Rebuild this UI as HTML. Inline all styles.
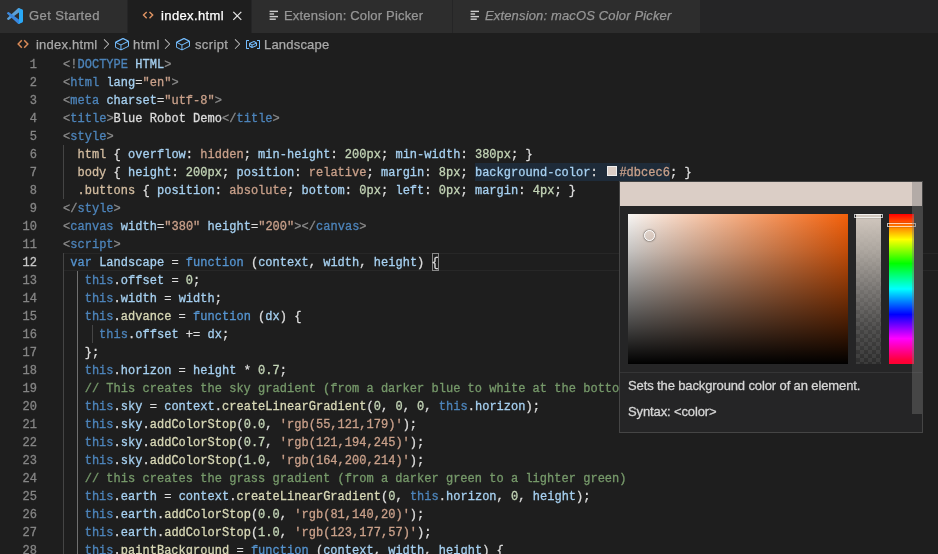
<!DOCTYPE html>
<html lang="en">
<head>
<meta charset="utf-8">
<title>index.html</title>
<style>
html,body{margin:0;padding:0;}
body{width:938px;height:554px;overflow:hidden;background:#1e1e1e;position:relative;font-family:"Liberation Sans",sans-serif;}
#tabs{position:absolute;left:0;top:0;width:938px;height:33px;background:#252526;}
.tab{position:absolute;top:0;height:33px;background:#2d2d2d;color:#969696;font-size:13px;line-height:32px;white-space:nowrap;}
.tab.active{background:#1e1e1e;color:#ffffff;}
.tab .lbl{position:absolute;top:0;}
.lbl,#crumbs span,.row,.txt{will-change:transform;}
.lbl,#crumbs span{-webkit-text-stroke:0.25px;}
.tab svg{position:absolute;}
#crumbs{position:absolute;left:0;top:33px;width:938px;height:22px;color:#a9a9a9;font-size:13px;line-height:22px;white-space:nowrap;}
#crumbs span,#crumbs svg{position:absolute;top:1px;}
#crumbs svg{top:3px;}
#editor{position:absolute;left:0;top:0;width:938px;height:554px;font-family:"Liberation Mono",monospace;font-size:12px;letter-spacing:0.024px;-webkit-text-stroke:0.3px;}
.row{position:absolute;left:0;width:938px;height:18px;line-height:18px;white-space:pre;}
.ln{position:absolute;left:0;top:1px;width:37px;text-align:right;color:#858585;}
.ln.cur{color:#c6c6c6;}
.code{position:absolute;top:1px;}
.hlbg{position:absolute;left:474.8px;top:163px;width:195px;height:18px;background:#1e2b39;}
.sw{display:inline-block;box-sizing:border-box;width:9.6px;height:9.6px;background:#dbcec6;border:1.2px solid #eeeeee;margin:0 2px 0 2.4px;vertical-align:0px;width:10px;height:10px;}
.brbox{position:absolute;left:432px;top:253px;width:7px;height:18px;box-sizing:border-box;border:1px solid #888888;}
.guide{position:absolute;width:1px;background:#454545;}
.guide.act{background:#707070;}
#curline{position:absolute;left:63px;top:253px;width:875px;height:18px;box-sizing:border-box;border-top:1px solid #272727;border-bottom:1px solid #272727;}
#hover{position:absolute;left:619px;top:181px;width:304px;height:252px;background:#252526;border:1px solid #454545;box-sizing:border-box;}
#hover .hdr{position:absolute;left:0;top:0;width:302px;height:24px;background:#dbcec6;}
#hover .sat{position:absolute;left:8px;top:32px;width:220px;height:150px;background:linear-gradient(to bottom,rgba(0,0,0,0) 0%,rgba(0,0,0,.21) 25%,rgba(0,0,0,.47) 50%,rgba(0,0,0,.73) 75%,#000 100%),linear-gradient(to right,#f8f6f4,#f4600a);}
#hover .knob{position:absolute;left:23.6px;top:47.8px;width:9px;height:9px;border:1px solid #fff;border-radius:50%;box-shadow:0 0 2px rgba(0,0,0,.8);}
#hover .alpha{position:absolute;left:236px;top:32px;width:25px;height:150px;background:linear-gradient(to bottom,#d3c9c0 0%,rgba(205,197,188,.78) 25%,rgba(190,184,178,.5) 50%,rgba(170,166,162,.22) 75%,rgba(160,160,160,0) 100%),repeating-conic-gradient(#3b3b3b 0% 25%,#2d2d2d 0% 50%) 0 0/8px 8px;}
#hover .hue{position:absolute;left:269px;top:32px;width:25px;height:150px;background:linear-gradient(to bottom,#ff0000 0%,#ffff00 17%,#00ff00 33%,#00ffff 50%,#0000ff 67%,#ff00ff 83%,#ff0040 97%,#ff0030 100%);}
#hover .slider{position:absolute;width:29px;height:4px;box-sizing:border-box;border:1px solid rgba(255,255,255,.71);box-shadow:0 0 1px rgba(0,0,0,.85);}
#hover .sep{position:absolute;left:0;top:190px;width:302px;height:1px;background:#353536;}
#hover .sb{position:absolute;left:292px;top:0;width:10px;height:232px;background:rgba(121,121,121,.4);}
#hover .txt{position:absolute;left:8px;-webkit-text-stroke:0.3px;color:#d6d6d6;font-size:13px;line-height:18px;white-space:nowrap;letter-spacing:-0.12px;}
</style>
</head>
<body>
<div id="tabs">
  <div class="tab" style="left:0;width:127px;">
    <svg style="left:7px;top:8px;" width="16" height="16" viewBox="0 0 100 100">
      <path fill="#5b9fd6" d="M96.46 10.8L75.86.88a6.23 6.23 0 0 0-7.11 1.2L1.3 63.58a4.17 4.17 0 0 0 0 6.17l5.51 5a2.78 2.78 0 0 0 3.55.16L93.36 13.37c2.73-2.07 6.64-.12 6.64 3.3v-.24a6.25 6.25 0 0 0-3.54-5.63z"/>
      <path fill="#3a86dc" d="M96.46 89.2l-20.6 9.92a6.23 6.23 0 0 1-7.11-1.2L1.3 36.42a4.17 4.17 0 0 1 0-6.17l5.51-5a2.78 2.78 0 0 1 3.55-.16l83 61.54c2.73 2.07 6.64.12 6.64-3.3v.24a6.25 6.25 0 0 1-3.54 5.63z"/>
      <path fill="#29a9f7" d="M75.86 99.13a6.23 6.23 0 0 1-7.11-1.21c2.31 2.3 6.25.67 6.25-2.59V4.67c0-3.26-3.94-4.89-6.25-2.59a6.23 6.23 0 0 1 7.11-1.2l20.6 9.9A6.25 6.25 0 0 1 100 16.41v67.18a6.25 6.25 0 0 1-3.54 5.63l-20.6 9.91z"/>
    </svg>
    <span class="lbl" style="left:29.4px;letter-spacing:0.40px;">Get Started</span>
  </div>
  <div class="tab active" style="left:128px;width:123px;">
    <svg style="left:12px;top:8px;" width="16" height="16" viewBox="0 0 16 16" fill="none" stroke="#df9463" stroke-width="1.4"><path d="M6.7 3.9L3.5 7.1L6.7 10.3M9.5 3.9L12.7 7.1L9.5 10.3"/></svg>
    <span class="lbl" style="left:32.8px;letter-spacing:0.38px;">index.html</span>
    <svg style="left:101px;top:8px;" width="16" height="16" viewBox="0 0 16 16" fill="none" stroke="#e8e8e8" stroke-width="1.2"><path d="M4.3 3.9L12.3 11.9M12.3 3.9L4.3 11.9"/></svg>
  </div>
  <div class="tab" style="left:252px;width:200px;">
    <svg style="left:16px;top:8px;" width="16" height="16" viewBox="0 0 16 16" fill="#cfcfcf"><rect x="1.6" y="2.7" width="8.4" height="1.4"/><rect x="1.6" y="5.3" width="4.5" height="1.4"/><rect x="1.6" y="7.9" width="8.4" height="1.4"/><rect x="1.6" y="10.5" width="6.2" height="1.4"/></svg>
    <span class="lbl" style="left:32.3px;letter-spacing:0.18px;">Extension: Color Picker</span>
  </div>
  <div class="tab" style="left:453px;width:247px;">
    <svg style="left:16px;top:8px;" width="16" height="16" viewBox="0 0 16 16" fill="#cfcfcf"><rect x="1.6" y="2.7" width="8.4" height="1.4"/><rect x="1.6" y="5.3" width="4.5" height="1.4"/><rect x="1.6" y="7.9" width="8.4" height="1.4"/><rect x="1.6" y="10.5" width="6.2" height="1.4"/></svg>
    <span class="lbl" style="left:31.8px;font-style:italic;letter-spacing:0.15px;">Extension: macOS Color Picker</span>
  </div>
</div>
<div id="crumbs">
  <svg style="left:15px;" width="16" height="16" viewBox="0 0 16 16" fill="none" stroke="#d98a57" stroke-width="1.5"><path d="M6.8 4.3L3.2 8L6.8 11.7M9.2 4.3L12.8 8L9.2 11.7"/></svg>
  <span style="left:35.6px;letter-spacing:0.22px;">index.html</span>
  <svg style="left:98px;" width="16" height="16" viewBox="0 0 16 16" fill="#c5c5c5"><path d="M10.072 8.024L5.715 3.667l.618-.62L11 7.716v.618L6.333 13l-.618-.619 4.357-4.357z"/></svg>
  <svg style="left:114px;" width="16" height="16" viewBox="0 0 16 16" fill="#75beff"><path d="M14.45 4.5l-5-2.5h-.9l-7 3.5-.55.89v4.5l.55.9 5 2.5h.9l7-3.5.55-.9v-4.5l-.55-.89zm-8 8.64l-4.5-2.25v-3.8l4.5 2.25v3.8zm.5-4.64l-4.23-2.11 6.28-3.14 4.23 2.11-6.28 3.14zm7 1.39l-6.5 3.25v-3.8l6.5-3.25v3.8z"/></svg>
  <span style="left:133px;letter-spacing:0.6px;">html</span>
  <svg style="left:159px;" width="16" height="16" viewBox="0 0 16 16" fill="#c5c5c5"><path d="M10.072 8.024L5.715 3.667l.618-.62L11 7.716v.618L6.333 13l-.618-.619 4.357-4.357z"/></svg>
  <svg style="left:175px;" width="16" height="16" viewBox="0 0 16 16" fill="#75beff"><path d="M14.45 4.5l-5-2.5h-.9l-7 3.5-.55.89v4.5l.55.9 5 2.5h.9l7-3.5.55-.9v-4.5l-.55-.89zm-8 8.64l-4.5-2.25v-3.8l4.5 2.25v3.8zm.5-4.64l-4.23-2.11 6.28-3.14 4.23 2.11-6.28 3.14zm7 1.39l-6.5 3.25v-3.8l6.5-3.25v3.8z"/></svg>
  <span style="left:194.8px;letter-spacing:0.36px;">script</span>
  <svg style="left:228.5px;" width="16" height="16" viewBox="0 0 16 16" fill="#c5c5c5"><path d="M10.072 8.024L5.715 3.667l.618-.62L11 7.716v.618L6.333 13l-.618-.619 4.357-4.357z"/></svg>
  <svg style="left:245px;" width="16" height="16" viewBox="0 0 16 16" fill="#75beff"><path d="M2 5h2V4H1.500l-.5.5v8l.5.500H4v-1H2V5zm12.500-1H12v1h2v7h-2v1h2.500l.5-.5v-8l-.5-.5zm-2.740 2.570L12 7v2.510l-.3.450-4.500 2h-.460l-2.500-1.500-.240-.430v-2.500l.3-.460 4.500-2h.460l2.500 1.500zM5 9.710l1.500.9V9.280L5 8.380v1.330zm.580-2.150l1.450.870 3.390-1.500-1.450-.870-3.390 1.500zm1.950 3.170l3.500-1.560v-1.400l-3.500 1.550v1.410z"/></svg>
  <span style="left:263.8px;letter-spacing:0.2px;">Landscape</span>
</div>
<div id="editor">
<div id="curline"></div>
<div class="hlbg"></div>
<div class="brbox"></div>
<div class="guide" style="left:63px;top:145px;height:54px;"></div>
<div class="guide" style="left:63px;top:253px;height:301px;"></div>
<div class="guide act" style="left:77px;top:271px;height:283px;"></div>
<div class="guide" style="left:92px;top:325px;height:18px;"></div>
<div class="row" style="top:55px"><span class="ln">1</span><span class="code" style="left:63.00px"><span style="color:#8a8a8a">&lt;!</span><span style="color:#4d84ba">DOCTYPE</span><span style="color:#dcdcdc"> </span><span style="color:#a6d0f0">HTML</span><span style="color:#8a8a8a">&gt;</span></span></div>
<div class="row" style="top:73px"><span class="ln">2</span><span class="code" style="left:63.00px"><span style="color:#8a8a8a">&lt;</span><span style="color:#4d84ba">html</span><span style="color:#dcdcdc"> </span><span style="color:#a6d0f0">lang</span><span style="color:#dcdcdc">=</span><span style="color:#c9a08a">"en"</span><span style="color:#8a8a8a">&gt;</span></span></div>
<div class="row" style="top:91px"><span class="ln">3</span><span class="code" style="left:63.00px"><span style="color:#8a8a8a">&lt;</span><span style="color:#4d84ba">meta</span><span style="color:#dcdcdc"> </span><span style="color:#a6d0f0">charset</span><span style="color:#dcdcdc">=</span><span style="color:#c9a08a">"utf-8"</span><span style="color:#8a8a8a">&gt;</span></span></div>
<div class="row" style="top:109px"><span class="ln">4</span><span class="code" style="left:63.00px"><span style="color:#8a8a8a">&lt;</span><span style="color:#4d84ba">title</span><span style="color:#8a8a8a">&gt;</span><span style="color:#dcdcdc">Blue Robot Demo</span><span style="color:#8a8a8a">&lt;/</span><span style="color:#4d84ba">title</span><span style="color:#8a8a8a">&gt;</span></span></div>
<div class="row" style="top:127px"><span class="ln">5</span><span class="code" style="left:63.00px"><span style="color:#8a8a8a">&lt;</span><span style="color:#4d84ba">style</span><span style="color:#8a8a8a">&gt;</span></span></div>
<div class="row" style="top:145px"><span class="ln">6</span><span class="code" style="left:77.45px"><span style="color:#d2bca0">html</span><span style="color:#dcdcdc"> { </span><span style="color:#a6d0f0">overflow</span><span style="color:#dcdcdc">: </span><span style="color:#c9a08a">hidden</span><span style="color:#dcdcdc">; </span><span style="color:#a6d0f0">min-height</span><span style="color:#dcdcdc">: </span><span style="color:#c3d4b6">200px</span><span style="color:#dcdcdc">; </span><span style="color:#a6d0f0">min-width</span><span style="color:#dcdcdc">: </span><span style="color:#c3d4b6">380px</span><span style="color:#dcdcdc">; }</span></span></div>
<div class="row" style="top:163px"><span class="ln">7</span><span class="code" style="left:77.45px"><span style="color:#d2bca0">body</span><span style="color:#dcdcdc"> { </span><span style="color:#a6d0f0">height</span><span style="color:#dcdcdc">: </span><span style="color:#c3d4b6">200px</span><span style="color:#dcdcdc">; </span><span style="color:#a6d0f0">position</span><span style="color:#dcdcdc">: </span><span style="color:#c9a08a">relative</span><span style="color:#dcdcdc">; </span><span style="color:#a6d0f0">margin</span><span style="color:#dcdcdc">: </span><span style="color:#c3d4b6">8px</span><span style="color:#dcdcdc">; </span><span class="hl"><span style="color:#a6d0f0">background-color</span><span style="color:#dcdcdc">: </span></span><span class="sw"></span><span style="color:#c9a08a">#dbcec6</span><span style="color:#dcdcdc">; }</span></span></div>
<div class="row" style="top:181px"><span class="ln">8</span><span class="code" style="left:77.45px"><span style="color:#d2bca0">.buttons</span><span style="color:#dcdcdc"> { </span><span style="color:#a6d0f0">position</span><span style="color:#dcdcdc">: </span><span style="color:#c9a08a">absolute</span><span style="color:#dcdcdc">; </span><span style="color:#a6d0f0">bottom</span><span style="color:#dcdcdc">: </span><span style="color:#c3d4b6">0px</span><span style="color:#dcdcdc">; </span><span style="color:#a6d0f0">left</span><span style="color:#dcdcdc">: </span><span style="color:#c3d4b6">0px</span><span style="color:#dcdcdc">; </span><span style="color:#a6d0f0">margin</span><span style="color:#dcdcdc">: </span><span style="color:#c3d4b6">4px</span><span style="color:#dcdcdc">; }</span></span></div>
<div class="row" style="top:199px"><span class="ln">9</span><span class="code" style="left:63.00px"><span style="color:#8a8a8a">&lt;/</span><span style="color:#4d84ba">style</span><span style="color:#8a8a8a">&gt;</span></span></div>
<div class="row" style="top:217px"><span class="ln">10</span><span class="code" style="left:63.00px"><span style="color:#8a8a8a">&lt;</span><span style="color:#4d84ba">canvas</span><span style="color:#dcdcdc"> </span><span style="color:#a6d0f0">width</span><span style="color:#dcdcdc">=</span><span style="color:#c9a08a">"380"</span><span style="color:#dcdcdc"> </span><span style="color:#a6d0f0">height</span><span style="color:#dcdcdc">=</span><span style="color:#c9a08a">"200"</span><span style="color:#8a8a8a">&gt;&lt;/</span><span style="color:#4d84ba">canvas</span><span style="color:#8a8a8a">&gt;</span></span></div>
<div class="row" style="top:235px"><span class="ln">11</span><span class="code" style="left:63.00px"><span style="color:#8a8a8a">&lt;</span><span style="color:#4d84ba">script</span><span style="color:#8a8a8a">&gt;</span></span></div>
<div class="row" style="top:253px"><span class="ln cur">12</span><span class="code" style="left:70.22px"><span style="color:#5594d0">var</span><span style="color:#dcdcdc"> </span><span style="color:#a6d0f0">Landscape</span><span style="color:#dcdcdc"> = </span><span style="color:#5594d0">function</span><span style="color:#dcdcdc"> (</span><span style="color:#a6d0f0">context</span><span style="color:#dcdcdc">, </span><span style="color:#a6d0f0">width</span><span style="color:#dcdcdc">, </span><span style="color:#a6d0f0">height</span><span style="color:#dcdcdc">) </span><span style="color:#dcdcdc">{</span></span></div>
<div class="row" style="top:271px"><span class="ln">13</span><span class="code" style="left:84.67px"><span style="color:#4d84ba">this</span><span style="color:#dcdcdc">.</span><span style="color:#a6d0f0">offset</span><span style="color:#dcdcdc"> = </span><span style="color:#c3d4b6">0</span><span style="color:#dcdcdc">;</span></span></div>
<div class="row" style="top:289px"><span class="ln">14</span><span class="code" style="left:84.67px"><span style="color:#4d84ba">this</span><span style="color:#dcdcdc">.</span><span style="color:#a6d0f0">width</span><span style="color:#dcdcdc"> = </span><span style="color:#a6d0f0">width</span><span style="color:#dcdcdc">;</span></span></div>
<div class="row" style="top:307px"><span class="ln">15</span><span class="code" style="left:84.67px"><span style="color:#4d84ba">this</span><span style="color:#dcdcdc">.</span><span style="color:#d8d8b6">advance</span><span style="color:#dcdcdc"> = </span><span style="color:#5594d0">function</span><span style="color:#dcdcdc"> (</span><span style="color:#a6d0f0">dx</span><span style="color:#dcdcdc">) {</span></span></div>
<div class="row" style="top:325px"><span class="ln">16</span><span class="code" style="left:99.12px"><span style="color:#4d84ba">this</span><span style="color:#dcdcdc">.</span><span style="color:#a6d0f0">offset</span><span style="color:#dcdcdc"> += </span><span style="color:#a6d0f0">dx</span><span style="color:#dcdcdc">;</span></span></div>
<div class="row" style="top:343px"><span class="ln">17</span><span class="code" style="left:84.67px"><span style="color:#dcdcdc">};</span></span></div>
<div class="row" style="top:361px"><span class="ln">18</span><span class="code" style="left:84.67px"><span style="color:#4d84ba">this</span><span style="color:#dcdcdc">.</span><span style="color:#a6d0f0">horizon</span><span style="color:#dcdcdc"> = </span><span style="color:#a6d0f0">height</span><span style="color:#dcdcdc"> * </span><span style="color:#c3d4b6">0.7</span><span style="color:#dcdcdc">;</span></span></div>
<div class="row" style="top:379px"><span class="ln">19</span><span class="code" style="left:84.67px"><span style="color:#76996a">// This creates the sky gradient (from a darker blue to white at the bottom)</span></span></div>
<div class="row" style="top:397px"><span class="ln">20</span><span class="code" style="left:84.67px"><span style="color:#4d84ba">this</span><span style="color:#dcdcdc">.</span><span style="color:#a6d0f0">sky</span><span style="color:#dcdcdc"> = </span><span style="color:#a6d0f0">context</span><span style="color:#dcdcdc">.</span><span style="color:#d8d8b6">createLinearGradient</span><span style="color:#dcdcdc">(</span><span style="color:#c3d4b6">0</span><span style="color:#dcdcdc">, </span><span style="color:#c3d4b6">0</span><span style="color:#dcdcdc">, </span><span style="color:#c3d4b6">0</span><span style="color:#dcdcdc">, </span><span style="color:#4d84ba">this</span><span style="color:#dcdcdc">.</span><span style="color:#a6d0f0">horizon</span><span style="color:#dcdcdc">);</span></span></div>
<div class="row" style="top:415px"><span class="ln">21</span><span class="code" style="left:84.67px"><span style="color:#4d84ba">this</span><span style="color:#dcdcdc">.</span><span style="color:#a6d0f0">sky</span><span style="color:#dcdcdc">.</span><span style="color:#d8d8b6">addColorStop</span><span style="color:#dcdcdc">(</span><span style="color:#c3d4b6">0.0</span><span style="color:#dcdcdc">, </span><span style="color:#c9a08a">'rgb(55,121,179)'</span><span style="color:#dcdcdc">);</span></span></div>
<div class="row" style="top:433px"><span class="ln">22</span><span class="code" style="left:84.67px"><span style="color:#4d84ba">this</span><span style="color:#dcdcdc">.</span><span style="color:#a6d0f0">sky</span><span style="color:#dcdcdc">.</span><span style="color:#d8d8b6">addColorStop</span><span style="color:#dcdcdc">(</span><span style="color:#c3d4b6">0.7</span><span style="color:#dcdcdc">, </span><span style="color:#c9a08a">'rgb(121,194,245)'</span><span style="color:#dcdcdc">);</span></span></div>
<div class="row" style="top:451px"><span class="ln">23</span><span class="code" style="left:84.67px"><span style="color:#4d84ba">this</span><span style="color:#dcdcdc">.</span><span style="color:#a6d0f0">sky</span><span style="color:#dcdcdc">.</span><span style="color:#d8d8b6">addColorStop</span><span style="color:#dcdcdc">(</span><span style="color:#c3d4b6">1.0</span><span style="color:#dcdcdc">, </span><span style="color:#c9a08a">'rgb(164,200,214)'</span><span style="color:#dcdcdc">);</span></span></div>
<div class="row" style="top:469px"><span class="ln">24</span><span class="code" style="left:84.67px"><span style="color:#76996a">// this creates the grass gradient (from a darker green to a lighter green)</span></span></div>
<div class="row" style="top:487px"><span class="ln">25</span><span class="code" style="left:84.67px"><span style="color:#4d84ba">this</span><span style="color:#dcdcdc">.</span><span style="color:#a6d0f0">earth</span><span style="color:#dcdcdc"> = </span><span style="color:#a6d0f0">context</span><span style="color:#dcdcdc">.</span><span style="color:#d8d8b6">createLinearGradient</span><span style="color:#dcdcdc">(</span><span style="color:#c3d4b6">0</span><span style="color:#dcdcdc">, </span><span style="color:#4d84ba">this</span><span style="color:#dcdcdc">.</span><span style="color:#a6d0f0">horizon</span><span style="color:#dcdcdc">, </span><span style="color:#c3d4b6">0</span><span style="color:#dcdcdc">, </span><span style="color:#a6d0f0">height</span><span style="color:#dcdcdc">);</span></span></div>
<div class="row" style="top:505px"><span class="ln">26</span><span class="code" style="left:84.67px"><span style="color:#4d84ba">this</span><span style="color:#dcdcdc">.</span><span style="color:#a6d0f0">earth</span><span style="color:#dcdcdc">.</span><span style="color:#d8d8b6">addColorStop</span><span style="color:#dcdcdc">(</span><span style="color:#c3d4b6">0.0</span><span style="color:#dcdcdc">, </span><span style="color:#c9a08a">'rgb(81,140,20)'</span><span style="color:#dcdcdc">);</span></span></div>
<div class="row" style="top:523px"><span class="ln">27</span><span class="code" style="left:84.67px"><span style="color:#4d84ba">this</span><span style="color:#dcdcdc">.</span><span style="color:#a6d0f0">earth</span><span style="color:#dcdcdc">.</span><span style="color:#d8d8b6">addColorStop</span><span style="color:#dcdcdc">(</span><span style="color:#c3d4b6">1.0</span><span style="color:#dcdcdc">, </span><span style="color:#c9a08a">'rgb(123,177,57)'</span><span style="color:#dcdcdc">);</span></span></div>
<div class="row" style="top:541px"><span class="ln">28</span><span class="code" style="left:84.67px"><span style="color:#4d84ba">this</span><span style="color:#dcdcdc">.</span><span style="color:#d8d8b6">paintBackground</span><span style="color:#dcdcdc"> = </span><span style="color:#5594d0">function</span><span style="color:#dcdcdc"> (</span><span style="color:#a6d0f0">context</span><span style="color:#dcdcdc">, </span><span style="color:#a6d0f0">width</span><span style="color:#dcdcdc">, </span><span style="color:#a6d0f0">height</span><span style="color:#dcdcdc">) {</span></span></div>
</div>
<div id="hover">
  <div class="hdr"></div>
  <div class="sat"></div>
  <div class="knob"></div>
  <div class="alpha"></div>
  <div class="hue"></div>
  <div class="slider" style="left:234px;top:32px;"></div>
  <div class="slider" style="left:267px;top:41px;"></div>
  <div class="sep"></div>
  <div class="txt" style="top:195px;">Sets the background color of an element.</div>
  <div class="txt" style="top:221px;">Syntax: &lt;color&gt;</div>
  <div class="sb"></div>
</div>
</body>
</html>
